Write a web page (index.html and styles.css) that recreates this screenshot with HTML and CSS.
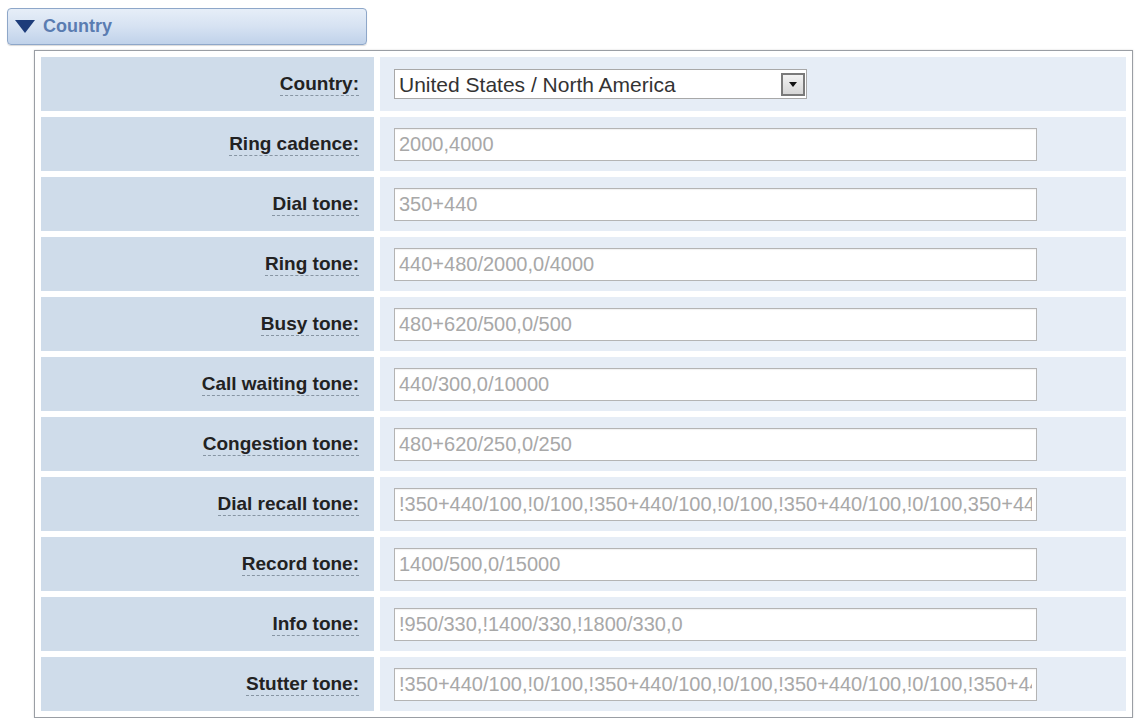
FILE: index.html
```html
<!DOCTYPE html>
<html lang="en">
<head>
    <meta charset="UTF-8">
    <meta name="viewport" content="width=device-width, initial-scale=1.0">
    <title>Country</title>
    <link rel="stylesheet" href="styles.css">
</head>
<body>

<div class="section-tab">
    <span class="tab-arrow"></span>
    <span class="tab-title">Country</span>
</div>

<div class="panel">
    <table class="settings">
        <tr>
            <th><span class="tip">Country:</span></th>
            <td>
                <div class="select-wrap">
                    <select class="country-select">
                        <option>United States / North America</option>
                    </select>
                    <span class="select-btn"><span class="select-arrow"></span></span>
                </div>
            </td>
        </tr>
        <tr>
            <th><span class="tip">Ring cadence:</span></th>
            <td><input type="text" class="tone" value="2000,4000"></td>
        </tr>
        <tr>
            <th><span class="tip">Dial tone:</span></th>
            <td><input type="text" class="tone" value="350+440"></td>
        </tr>
        <tr>
            <th><span class="tip">Ring tone:</span></th>
            <td><input type="text" class="tone" value="440+480/2000,0/4000"></td>
        </tr>
        <tr>
            <th><span class="tip">Busy tone:</span></th>
            <td><input type="text" class="tone" value="480+620/500,0/500"></td>
        </tr>
        <tr>
            <th><span class="tip">Call waiting tone:</span></th>
            <td><input type="text" class="tone" value="440/300,0/10000"></td>
        </tr>
        <tr>
            <th><span class="tip">Congestion tone:</span></th>
            <td><input type="text" class="tone" value="480+620/250,0/250"></td>
        </tr>
        <tr>
            <th><span class="tip">Dial recall tone:</span></th>
            <td><input type="text" class="tone" value="!350+440/100,!0/100,!350+440/100,!0/100,!350+440/100,!0/100,350+440"></td>
        </tr>
        <tr>
            <th><span class="tip">Record tone:</span></th>
            <td><input type="text" class="tone" value="1400/500,0/15000"></td>
        </tr>
        <tr>
            <th><span class="tip">Info tone:</span></th>
            <td><input type="text" class="tone" value="!950/330,!1400/330,!1800/330,0"></td>
        </tr>
        <tr>
            <th><span class="tip">Stutter tone:</span></th>
            <td><input type="text" class="tone" value="!350+440/100,!0/100,!350+440/100,!0/100,!350+440/100,!0/100,!350+440/100"></td>
        </tr>
    </table>
</div>

</body>
</html>
```
FILE: styles.css
```css
body {
    margin: 0;
    padding: 8px 0 0 7px;
    background-color: #fff;
    font-family: "Liberation Sans", Arial, sans-serif;
}
.section-tab {
    display: flex;
    align-items: center;
    width: 358px;
    height: 35px;
    border: 1px solid #8ea7c9;
    border-radius: 4px;
    background: linear-gradient(to bottom, #e6eef8 0%, #d6e2f2 50%, #c0d2ea 100%);
    box-shadow: 0 1px 1px rgba(0,0,0,0.15);
}
.tab-arrow {
    width: 0;
    height: 0;
    margin-left: 7px;
    border-left: 10px solid transparent;
    border-right: 10px solid transparent;
    border-top: 13px solid #1d3c7a;
}
.tab-title {
    margin-left: 8px;
    color: #5a7cb1;
    font-size: 18px;
    font-weight: bold;
}
.panel {
    width: 1097px;
    margin: 5px 0 0 27px;
    border: 1px solid #9a9ea4;
    box-shadow: 0 0 2px rgba(0,0,0,0.15);
    background-color: #fff;
}
.settings {
    width: 100%;
    border-collapse: separate;
    border-spacing: 6px;
}
.settings th {
    width: 318px;
    height: 54px;
    padding: 0 15px 0 0;
    background-color: #cfdcea;
    text-align: right;
    font-size: 19px;
    font-weight: bold;
    color: #222;
}
.settings td {
    height: 54px;
    padding: 0 0 0 14px;
    background-color: #e6edf6;
}
.tip {
    border-bottom: 1px dashed #8795a3;
    padding-bottom: 1px;
}
.tone {
    display: block;
    box-sizing: border-box;
    width: 643px;
    height: 33px;
    padding: 0 4px;
    border: 1px solid #b4b4b4;
    box-shadow: inset 0 1px 1px rgba(0,0,0,0.06);
    background-color: #fff;
    font-family: "Liberation Sans", Arial, sans-serif;
    font-size: 20px;
    color: #a8a8a8;
}
.select-wrap {
    position: relative;
    width: 413px;
    height: 30px;
}
.country-select {
    -webkit-appearance: none;
    appearance: none;
    box-sizing: border-box;
    width: 413px;
    height: 30px;
    padding: 0 4px;
    border: 1px solid #a8a8a8;
    border-radius: 0;
    background-color: #fff;
    font-family: "Liberation Sans", Arial, sans-serif;
    font-size: 21px;
    color: #333;
}
.select-btn {
    position: absolute;
    top: 4px;
    right: 2px;
    box-sizing: border-box;
    width: 24px;
    height: 23px;
    border: 2px solid #7a7a7a;
    background: linear-gradient(to bottom, #f2f2f2, #d6d6d6);
    display: flex;
    align-items: center;
    justify-content: center;
}
.select-arrow {
    width: 0;
    height: 0;
    border-left: 4px solid transparent;
    border-right: 4px solid transparent;
    border-top: 5px solid #111;
}
```
